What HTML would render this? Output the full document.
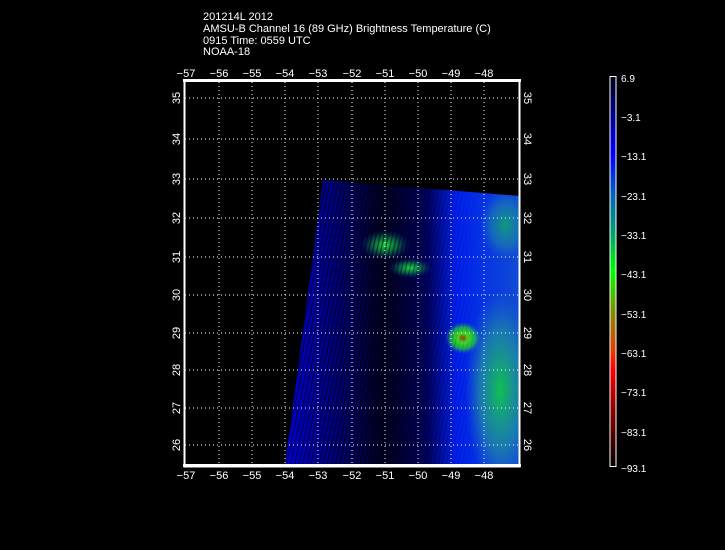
<!DOCTYPE html>
<html><head><style>
body{margin:0;background:#000;width:725px;height:550px;overflow:hidden}
svg{display:block}
text{font-family:"Liberation Sans",sans-serif;fill:#fff}
</style></head><body>
<svg width="725" height="550" viewBox="0 0 725 550">
<defs>
<linearGradient id="cb" x1="0" y1="0" x2="0" y2="1">
<stop offset="0" stop-color="#000018"/>
<stop offset="0.1" stop-color="#00008a"/>
<stop offset="0.2" stop-color="#0000ff"/>
<stop offset="0.3" stop-color="#0060c0"/>
<stop offset="0.4" stop-color="#00a070"/>
<stop offset="0.5" stop-color="#00ff00"/>
<stop offset="0.6" stop-color="#809000"/>
<stop offset="0.7" stop-color="#e04000"/>
<stop offset="0.75" stop-color="#ff0000"/>
<stop offset="0.85" stop-color="#900000"/>
<stop offset="1" stop-color="#000000"/>
</linearGradient>
<linearGradient id="bg" x1="0" y1="0" x2="1" y2="0">
<stop offset="0" stop-color="#0000e0"/>
<stop offset="0.25" stop-color="#000070"/>
<stop offset="0.42" stop-color="#000020"/>
<stop offset="0.6" stop-color="#000060"/>
<stop offset="0.72" stop-color="#0020f0"/>
<stop offset="1" stop-color="#1050d0"/>
</linearGradient>
<pattern id="st" width="4" height="6" patternUnits="userSpaceOnUse" patternTransform="rotate(12)">
<rect width="1.5" height="6" fill="#000" opacity="0.5"/>
</pattern>
<linearGradient id="mg" x1="0" y1="0" x2="1" y2="0">
<stop offset="0" stop-color="#fff"/><stop offset="0.5" stop-color="#fff"/><stop offset="1" stop-color="#000"/>
</linearGradient>
<mask id="mk"><rect x="280" y="175" width="200" height="295" fill="url(#mg)"/></mask>
<radialGradient id="g1"><stop offset="0" stop-color="#20e040"/><stop offset="0.5" stop-color="#109050" stop-opacity="0.7"/><stop offset="1" stop-color="#104080" stop-opacity="0"/></radialGradient>
<radialGradient id="g2"><stop offset="0" stop-color="#a04010"/><stop offset="0.3" stop-color="#40e020"/><stop offset="0.7" stop-color="#20c040" stop-opacity="0.8"/><stop offset="1" stop-color="#2060c0" stop-opacity="0"/></radialGradient>
<radialGradient id="g3"><stop offset="0" stop-color="#10c050"/><stop offset="0.6" stop-color="#2090a0" stop-opacity="0.7"/><stop offset="1" stop-color="#2070c0" stop-opacity="0"/></radialGradient>
<clipPath id="dc"><polygon points="323,180 520,196 520,465 285,465"/></clipPath>
</defs>
<text x="203" y="20" font-size="11">201214L 2012</text>
<text x="203" y="32" font-size="11">AMSU-B Channel 16 (89 GHz) Brightness Temperature (C)</text>
<text x="203" y="44" font-size="11">0915 Time: 0559 UTC</text>
<text x="203" y="55" font-size="11">NOAA-18</text>
<g clip-path="url(#dc)">
<rect x="280" y="175" width="245" height="295" fill="url(#bg)"/>
<ellipse cx="500" cy="390" rx="35" ry="100" fill="url(#g3)"/>
<ellipse cx="505" cy="225" rx="25" ry="35" fill="url(#g3)" opacity="0.7"/>
<ellipse cx="385" cy="245" rx="25" ry="15" fill="url(#g1)"/>
<ellipse cx="410" cy="268" rx="22" ry="10" fill="url(#g1)"/>
<ellipse cx="463" cy="338" rx="18" ry="16" fill="url(#g2)"/>
<rect x="280" y="175" width="200" height="295" fill="url(#st)" mask="url(#mk)"/>
</g>
<g stroke="#fff" stroke-width="1" stroke-dasharray="1,3">
<line x1="219" y1="82" x2="219" y2="466"/><line x1="252" y1="82" x2="252" y2="466"/><line x1="285" y1="82" x2="285" y2="466"/><line x1="318" y1="82" x2="318" y2="466"/><line x1="352" y1="82" x2="352" y2="466"/><line x1="385" y1="82" x2="385" y2="466"/><line x1="418" y1="82" x2="418" y2="466"/><line x1="451" y1="82" x2="451" y2="466"/><line x1="484" y1="82" x2="484" y2="466"/>
<line x1="185" y1="98" x2="519" y2="98"/><line x1="185" y1="139" x2="519" y2="139"/><line x1="185" y1="179" x2="519" y2="179"/><line x1="185" y1="218" x2="519" y2="218"/><line x1="185" y1="257" x2="519" y2="257"/><line x1="185" y1="295" x2="519" y2="295"/><line x1="185" y1="333" x2="519" y2="333"/><line x1="185" y1="370" x2="519" y2="370"/><line x1="185" y1="408" x2="519" y2="408"/><line x1="185" y1="445" x2="519" y2="445"/>
</g>
<rect x="184.5" y="80.5" width="335" height="386" fill="none" stroke="#fff" stroke-width="2"/>
<rect x="183" y="79" width="338" height="3" fill="#fff"/>
<rect x="183" y="464" width="338" height="3" fill="#fff"/>
<g font-size="11" text-anchor="middle">
<text x="186" y="77">−57</text><text x="219" y="77">−56</text><text x="252" y="77">−55</text><text x="285" y="77">−54</text><text x="318" y="77">−53</text><text x="352" y="77">−52</text><text x="385" y="77">−51</text><text x="418" y="77">−50</text><text x="451" y="77">−49</text><text x="484" y="77">−48</text>
<text x="186" y="479">−57</text><text x="219" y="479">−56</text><text x="252" y="479">−55</text><text x="285" y="479">−54</text><text x="318" y="479">−53</text><text x="352" y="479">−52</text><text x="385" y="479">−51</text><text x="418" y="479">−50</text><text x="451" y="479">−49</text><text x="484" y="479">−48</text>
</g>
<g font-size="11" text-anchor="middle">
<text transform="translate(180,98) rotate(-90)">35</text><text transform="translate(180,139) rotate(-90)">34</text><text transform="translate(180,179) rotate(-90)">33</text><text transform="translate(180,218) rotate(-90)">32</text><text transform="translate(180,257) rotate(-90)">31</text><text transform="translate(180,295) rotate(-90)">30</text><text transform="translate(180,333) rotate(-90)">29</text><text transform="translate(180,370) rotate(-90)">28</text><text transform="translate(180,408) rotate(-90)">27</text><text transform="translate(180,445) rotate(-90)">26</text>
<text transform="translate(524,98) rotate(90)">35</text><text transform="translate(524,139) rotate(90)">34</text><text transform="translate(524,179) rotate(90)">33</text><text transform="translate(524,218) rotate(90)">32</text><text transform="translate(524,257) rotate(90)">31</text><text transform="translate(524,295) rotate(90)">30</text><text transform="translate(524,333) rotate(90)">29</text><text transform="translate(524,370) rotate(90)">28</text><text transform="translate(524,408) rotate(90)">27</text><text transform="translate(524,445) rotate(90)">26</text>
</g>
<rect x="610" y="76.5" width="6" height="390" fill="url(#cb)" stroke="#fff" stroke-width="1"/>
<g font-size="10">
<text x="621" y="82">6.9</text><text x="621" y="121">−3.1</text><text x="621" y="160">−13.1</text><text x="621" y="200">−23.1</text><text x="621" y="239">−33.1</text><text x="621" y="278">−43.1</text><text x="621" y="318">−53.1</text><text x="621" y="357">−63.1</text><text x="621" y="396">−73.1</text><text x="621" y="436">−83.1</text><text x="621" y="472">−93.1</text>
</g>
</svg>
</body></html>
